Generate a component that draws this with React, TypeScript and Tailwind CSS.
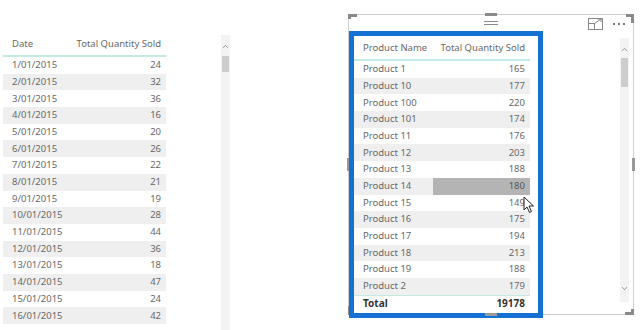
import { ChevronUp, ChevronDown } from 'lucide-react';

const dates: [string, number][] = [
  ['1/01/2015', 24], ['2/01/2015', 32], ['3/01/2015', 36], ['4/01/2015', 16],
  ['5/01/2015', 20], ['6/01/2015', 26], ['7/01/2015', 22], ['8/01/2015', 21],
  ['9/01/2015', 19], ['10/01/2015', 28], ['11/01/2015', 44], ['12/01/2015', 36],
  ['13/01/2015', 18], ['14/01/2015', 47], ['15/01/2015', 24], ['16/01/2015', 42],
];

const products: [string, number][] = [
  ['Product 1', 165], ['Product 10', 177], ['Product 100', 220], ['Product 101', 174],
  ['Product 11', 176], ['Product 12', 203], ['Product 13', 188], ['Product 14', 180],
  ['Product 15', 149], ['Product 16', 175], ['Product 17', 194], ['Product 18', 213],
  ['Product 19', 188], ['Product 2', 179],
];

const font = { fontFamily: '"Segoe UI", "Noto Sans", "Open Sans", sans-serif' };

const Scrollbar = ({ h, thumbTop, thumbH, down }: { h: string; thumbTop: string; thumbH: string; down?: boolean }) => (
  <div className={`flex flex-col items-center w-[9px] bg-[#f3f3f3] ${h}`}>
    <ChevronUp className="w-[9px] h-[9px] mt-[7px] text-[#777]" strokeWidth={2} />
    <div className={`w-[7px] bg-[#cdcdcd] ${thumbTop} ${thumbH}`} />
    {down && <ChevronDown className="w-[9px] h-[9px] mt-auto mb-[9px] text-[#777]" strokeWidth={2} />}
  </div>
);

const DateTable = () => (
  <div className="w-[163px] mt-[33px] ml-[3px] text-[9.5px] text-[#686868]">
    <div className="flex items-center justify-between h-[22px] px-[9px] pr-[5px]">
      <span>Date</span>
      <span>Total Quantity Sold</span>
    </div>
    <div className="h-[2px] bg-[#c3ebe3]" />
    {dates.map(([d, q], i) => (
      <div
        key={d}
        className={`flex items-center justify-between h-[16.7px] pl-[9px] pr-[5px] ${i % 2 ? 'bg-[#efefef]' : 'bg-white'}`}
      >
        <span>{d}</span>
        <span>{q}</span>
      </div>
    ))}
  </div>
);

const ProductTable = () => (
  <div className="w-[194px] h-[287px] border-[5px] border-[#1570d3] bg-white pt-[1px] text-[9.5px] text-[#686868] relative z-10">
    <div className="w-[176px]">
      <div className="flex items-center justify-between h-[22px] pl-[9px] pr-[5px]">
        <span>Product Name</span>
        <span>Total Quantity Sold</span>
      </div>
      <div className="h-[2px] bg-[#c3ebe3]" />
      {products.map(([p, q], i) => (
        <div
          key={p}
          className={`flex items-center h-[16.7px] ${i % 2 ? 'bg-[#efefef]' : 'bg-white'}`}
        >
          <span className="w-[79px] pl-[9px]">{p}</span>
          <span className={`flex-1 h-full flex items-center justify-end pr-[5px] ${p === 'Product 14' ? 'bg-[#b4b4b4] text-[#555]' : ''}`}>
            {q}
          </span>
        </div>
      ))}
      <div className="h-[1px] bg-[#c3ebe3]" />
      <div className="flex items-center justify-between h-[16px] pl-[9px] pr-[5px] font-bold text-[10px] text-[#333]">
        <span>Total</span>
        <span>19178</span>
      </div>
    </div>
  </div>
);

const App = () => {
  return (
    <div className="relative w-[640px] h-[330px] bg-white flex overflow-hidden" style={font}>
      <DateTable />
      <div className="ml-[55px] mt-[35px]">
        <Scrollbar h="h-[295px]" thumbTop="mt-[5px]" thumbH="h-[16px]" />
      </div>

      {/* visual frame */}
      <div className="relative ml-[118px] mt-[14px] w-[286px] h-[301px] border border-[#cfcfcf]">
        <div className="relative h-[16px] flex items-center">
          <div className="absolute left-[135px] top-[6px] w-[14px] flex flex-col gap-[2px]">
            <div className="h-[1px] bg-[#888]" />
            <div className="h-[1px] bg-[#888]" />
          </div>
          <svg className="absolute left-[239px] top-[3px]" width="15" height="12" viewBox="0 0 15 12" fill="none" stroke="#888" strokeWidth="1">
            <rect x="0.5" y="0.5" width="14" height="11" />
            <rect x="0.5" y="5.5" width="6" height="6" />
            <path d="M6.5 5.5 L13 1 M9.5 1 H13 V4" />
          </svg>
          <div className="absolute left-[264px] top-[8px] flex gap-[3px]">
            <div className="w-[2px] h-[2px] bg-[#777]" />
            <div className="w-[2px] h-[2px] bg-[#777]" />
            <div className="w-[2px] h-[2px] bg-[#777]" />
          </div>
        </div>
        <div className="flex">
          <ProductTable />
          <div className="ml-[77px] mt-[7px]">
            <Scrollbar h="h-[264px]" thumbTop="mt-[4px]" thumbH="h-[29px]" down />
          </div>
        </div>

        {/* corner brackets and handles */}
        <div className="absolute -left-[1px] -top-[1px] w-[9px] h-[5px] border-l-[3px] border-t-[3px] border-[#8a8a8a]" />
        <div className="absolute -right-[1px] -top-[1px] w-[8px] h-[9px] border-r-[3px] border-t-[3px] border-[#8a8a8a]" />
        <div className="absolute -right-[1px] -bottom-[1px] w-[9px] h-[6px] border-r-[3px] border-b-[3px] border-[#8a8a8a]" />
        <div className="absolute -left-[1px] -bottom-[1px] w-[4px] h-[9px] border-l-[3px] border-b-[3px] border-[#8a8a8a]" />
        <div className="absolute left-[136px] -top-[2px] w-[12px] h-[3px] bg-[#8a8a8a]" />
        <div className="absolute left-[136px] -bottom-[2px] w-[12px] h-[3px] bg-[#999] z-20" />
        <div className="absolute -left-[2px] top-[143px] w-[3px] h-[13px] bg-[#999]" />
        <div className="absolute -right-[2px] top-[143px] w-[3px] h-[13px] bg-[#999]" />

        {/* mouse cursor */}
        <svg className="absolute left-[174px] top-[181px] z-30" width="12" height="18" viewBox="0 0 12 18">
          <path d="M1 1 V14 L4 11 L6.5 16.5 L8.5 15.5 L6 10 H10.5 Z" fill="#fff" stroke="#222" strokeWidth="1" strokeLinejoin="round" />
        </svg>
      </div>
    </div>
  );
};

export default App;
